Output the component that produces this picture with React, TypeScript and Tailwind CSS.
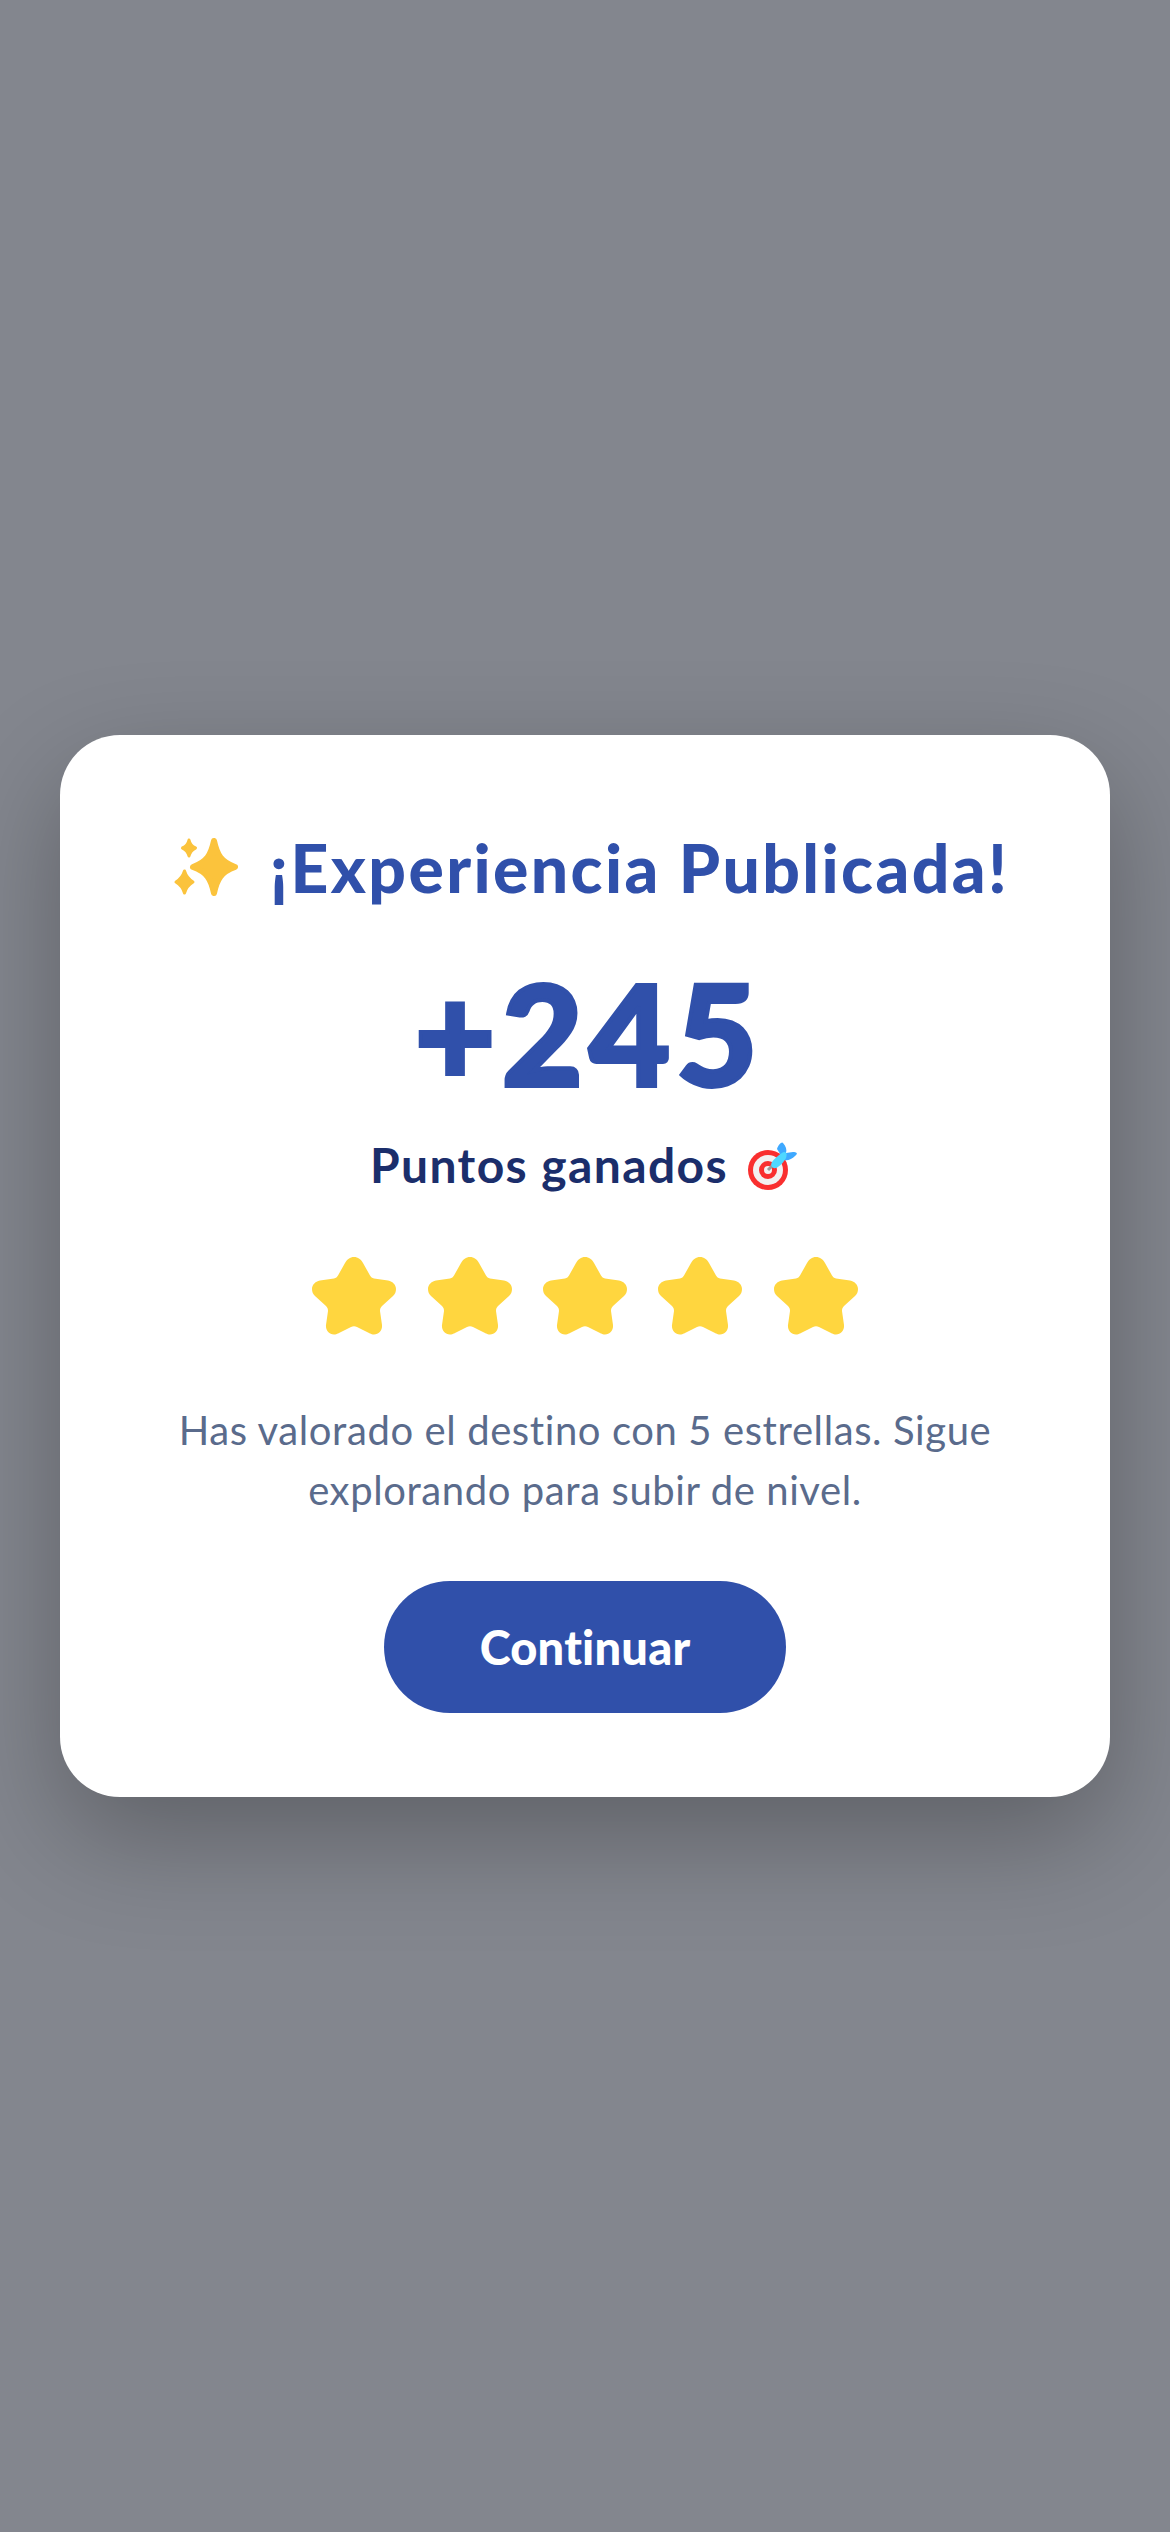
const Sparkles = () => (
  <svg width="72" height="72" viewBox="0 0 72 72" className="shrink-0">
    <path fill="#FBC33C" stroke="#FBC33C" strokeWidth="6" strokeLinejoin="round" d="M43 10C46 24 50 31 64 36C50 41 46 48 43 62C40 48 36 41 22 36C36 31 40 24 43 10Z" />
    <path fill="#FBC33C" stroke="#FBC33C" strokeWidth="3" strokeLinejoin="round" d="M18 9C19 13.500 21 15.500 24.500 17C21 18.500 19 20.500 18 25C17 20.500 15 18.500 11.500 17C15 15.500 17 13.500 18 9Z" />
    <path fill="#FBC33C" stroke="#FBC33C" strokeWidth="3" strokeLinejoin="round" d="M13.500 40C15 45 17 48 22 51C17 54 15 57 13.500 62C12 57 10 54 5 51C10 48 12 45 13.500 40Z" />
  </svg>
)

const Dart = () => (
  <svg width="54" height="54" viewBox="0 0 54 54" className="shrink-0">
    <circle cx="22" cy="32" r="20" fill="#F92F2F" />
    <circle cx="22" cy="32" r="15" fill="#F3F1F1" />
    <circle cx="22" cy="32" r="9" fill="#F92F2F" />
    <circle cx="22" cy="32" r="4" fill="#F3F1F1" />
    <path d="M22 32L28 26" stroke="#9A9A9A" strokeWidth="3" />
    <path fill="#3FA9FF" d="M31 11C32 7 36 3 37 5C40 8 41 12 40 15L47 14C50 14 53 15 49 18C46 21 42 23 38 22Z" />
    <path fill="#4FD8FF" d="M26 24C28 21 35 15 38 14C41 14 41 17 40 20C38 24 33 29 30 30C26 31 24 27 26 24Z" />
  </svg>
)

const Star = () => (
  <svg width="84" height="78" viewBox="0 0 84 78">
    <path
      fill="#FFD63F"
      d="M42 0C46 0 49 2.500 51 6L58 18.500C59 20 60 21 62 21.500L76 23.500C81 24.500 84 28 84 32C84 35 83 37 81 39L70 49C68.500 50.500 68 52 68 54L70 68C70.500 73 67 77.500 62 77.500C60.500 77.500 59 77 58 76.500L45 70C43 69 41 69 39 70L26 76.500C25 77 23.500 77.500 22 77.500C17 77.500 13.500 73 14 68L16 54C16 52 15.500 50.500 14 49L3 39C1 37 0 35 0 32C0 28 3 24.500 8 23.500L22 21.500C24 21 25 20 26 18.500L33 6C35 2.500 38 0 42 0Z"
    />
  </svg>
)

export default function App() {
  return (
    <div className="flex h-[2532px] w-full items-center justify-center bg-[#83868E] px-[60px] font-['Lato',sans-serif]">
      <div className="flex h-[1062px] w-full flex-col items-center rounded-[60px] bg-white pt-[84px] shadow-[0_40px_110px_rgba(0,0,0,0.28)]">
        <div className="ml-[10px] flex h-[96px] items-center gap-[27px]">
          <Sparkles />
          <h1 className="text-[66px] font-black tracking-[2.4px] text-[#3050AA]">¡Experiencia Publicada!</h1>
        </div>
        <div className="mt-[32px] ml-[8px] h-[170px] text-[140px] leading-[170px] font-black tracking-[6px] text-[#3050AA] [-webkit-text-stroke:4px_#3050AA]">+245</div>
        <div className="mt-[12px] flex h-[72px] items-center gap-[18px]">
          <span className="text-[48px] font-bold tracking-[1.4px] text-[#1B2E6B]">Puntos ganados</span>
          <Dart />
        </div>
        <div className="mt-[56px] flex gap-[31.33px]">
          <Star />
          <Star />
          <Star />
          <Star />
          <Star />
        </div>
        <p className="mt-[65px] w-[880px] text-center text-[40px] leading-[60px] tracking-[0.6px] text-[#5A6B8C]">
          Has valorado el destino con 5 estrellas. Sigue explorando para subir de nivel.
        </p>
        <button className="mt-[61px] h-[132px] w-[402px] rounded-full bg-[#3050AA] text-[47px] font-black tracking-[0.2px] text-white">Continuar</button>
      </div>
    </div>
  )
}
